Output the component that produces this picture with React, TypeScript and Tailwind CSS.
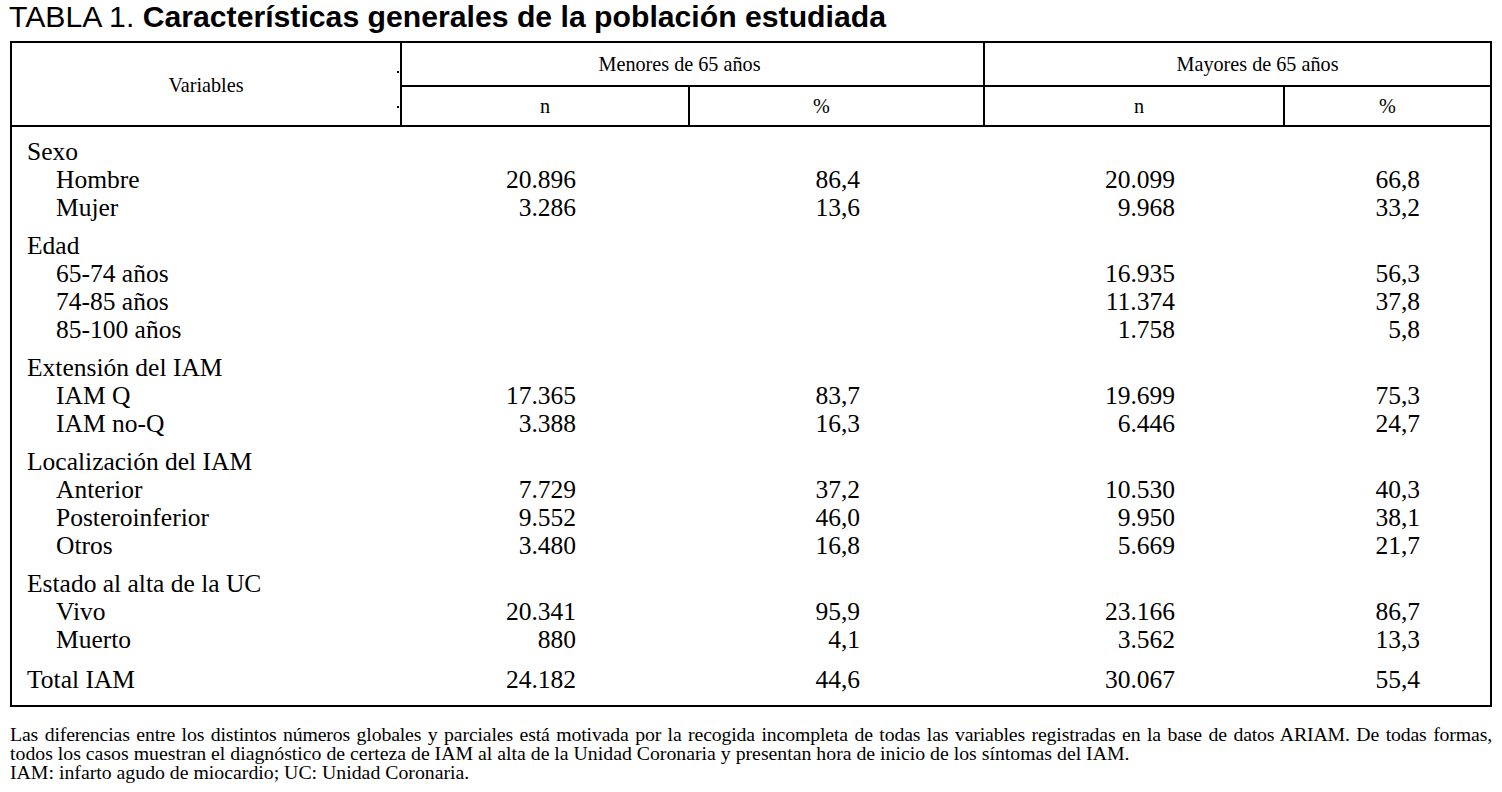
import React from "react";

type Row = [string, string, string, string, string];
const groups: { label: string; rows: Row[] }[] = [
  {
    label: "Sexo",
    rows: [
      ["Hombre", "20.896", "86,4", "20.099", "66,8"],
      ["Mujer", "3.286", "13,6", "9.968", "33,2"],
    ],
  },
  {
    label: "Edad",
    rows: [
      ["65-74 años", "", "", "16.935", "56,3"],
      ["74-85 años", "", "", "11.374", "37,8"],
      ["85-100 años", "", "", "1.758", "5,8"],
    ],
  },
  {
    label: "Extensión del IAM",
    rows: [
      ["IAM Q", "17.365", "83,7", "19.699", "75,3"],
      ["IAM no-Q", "3.388", "16,3", "6.446", "24,7"],
    ],
  },
  {
    label: "Localización del IAM",
    rows: [
      ["Anterior", "7.729", "37,2", "10.530", "40,3"],
      ["Posteroinferior", "9.552", "46,0", "9.950", "38,1"],
      ["Otros", "3.480", "16,8", "5.669", "21,7"],
    ],
  },
  {
    label: "Estado al alta de la UC",
    rows: [
      ["Vivo", "20.341", "95,9", "23.166", "86,7"],
      ["Muerto", "880", "4,1", "3.562", "13,3"],
    ],
  },
];

const gridCols = "grid grid-cols-[468px_96px_284px_315px_245px_1fr] leading-[28px]";

function DataRow({ r, sub }: { r: Row; sub?: boolean }) {
  return (
    <div className={gridCols}>
      <div className={sub ? "pl-[44px] whitespace-nowrap" : "pl-[15px] whitespace-nowrap"}>{r[0]}</div>
      <div className="text-right">{r[1]}</div>
      <div className="text-right">{r[2]}</div>
      <div className="text-right">{r[3]}</div>
      <div className="text-right">{r[4]}</div>
      <div />
    </div>
  );
}

export default function App() {
  return (
    <div className="relative w-[1502px] h-[792px] bg-white text-black overflow-hidden">
      <div className="h-[34px] pl-[9px] text-[30.2px] leading-[34px] whitespace-nowrap font-['Liberation_Sans',Arial,sans-serif]">
        TABLA 1. <span className="font-bold">Características generales de la población estudiada</span>
      </div>

      <div className="mt-[7px] ml-[10px] w-[1482px] border-2 border-black font-['Liberation_Serif','Times_New_Roman',serif]">
        <div className="flex h-[84px] border-b-2 border-black text-[20.2px]">
          <div className="w-[390px] border-r-2 border-black flex items-center justify-center pt-[2px]">Variables</div>
          <div className="flex-1 flex flex-col">
            <div className="h-[44px] border-b-2 border-black flex">
              <div className="w-[583px] border-r-2 border-black flex items-center justify-center pr-[26px]">
                Menores de 65 años
              </div>
              <div className="flex-1 flex items-center justify-center pl-[40px]">Mayores de 65 años</div>
            </div>
            <div className="flex-1 flex">
              <div className="w-[288px] border-r-2 border-black flex items-center justify-center">n</div>
              <div className="w-[295px] border-r-2 border-black flex items-center justify-center pr-[30px]">%</div>
              <div className="w-[300px] border-r-2 border-black flex items-center justify-center pl-[10px]">n</div>
              <div className="flex-1 flex items-center justify-center">%</div>
            </div>
          </div>
        </div>

        <div className="pt-[11px] pb-[11px] text-[25.5px]">
          {groups.map((g, i) => (
            <div key={g.label} className={i === 0 ? "" : "mt-[10px]"}>
              <div className="pl-[15px] leading-[28px]">{g.label}</div>
              {g.rows.map((r) => (
                <DataRow key={r[0]} r={r} sub />
              ))}
            </div>
          ))}
          <div className="mt-[12px]">
            <DataRow r={["Total IAM", "24.182", "44,6", "30.067", "55,4"]} />
          </div>
        </div>
      </div>

      <div className="mt-[18px] ml-[10px] w-[1482px] text-[19.8px] leading-[19px] font-['Liberation_Serif','Times_New_Roman',serif]">
        <div className="text-justify [text-align-last:justify] tracking-[-0.15px]">
          Las diferencias entre los distintos números globales y parciales está motivada por la recogida incompleta de todas las variables registradas en la base de datos ARIAM. De todas formas,
        </div>
        <div className="whitespace-nowrap">
          todos los casos muestran el diagnóstico de certeza de IAM al alta de la Unidad Coronaria y presentan hora de inicio de los síntomas del IAM.
        </div>
        <div>IAM: infarto agudo de miocardio; UC: Unidad Coronaria.</div>
      </div>

      <span className="absolute left-[397px] top-[71px] w-[2px] h-[2px] bg-black" />
      <span className="absolute left-[397px] top-[106px] w-[2px] h-[2px] bg-black" />
    </div>
  );
}
